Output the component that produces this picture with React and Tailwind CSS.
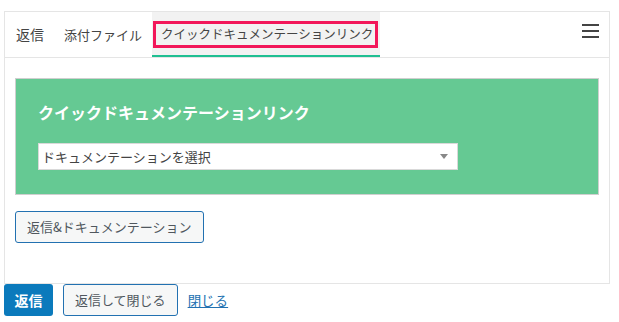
import React from 'react';

const font = { fontFamily: '"Noto Sans CJK JP", "Liberation Sans", sans-serif' };

function Hamburger() {
  return (
    <div className="flex flex-col gap-[4px] w-[17px]">
      <span className="block h-[2px] bg-[#444]" />
      <span className="block h-[2px] bg-[#444]" />
      <span className="block h-[2px] bg-[#444]" />
    </div>
  );
}

export default function App() {
  return (
    <div className="w-[619px] h-[322px] bg-white pt-[11px] text-[13px] text-[#333]" style={font}>
      <div className="ml-[4px] w-[606px] border border-[#e5e5e5] bg-white">
        {/* tabs */}
        <div className="flex items-stretch h-[46px] border-b border-[#e5e5e5] pl-[10px] pr-[10px]">
          <div className="flex items-center px-[1px] mr-[19px] text-[14px] text-[#444]">返信</div>
          <div className="flex items-center mr-[10px] text-[13px] text-[#444]">添付ファイル</div>
          <div className="flex items-center bg-[#f2f2f2] border-b-2 border-[#1fbf92] pl-[1px] w-[228px]">
            <div className="border-[3px] border-[#f2175a] h-[27px] flex items-center pl-[5px] w-[225px] mt-[2px] text-[12.5px] text-[#444] whitespace-nowrap">
              クイックドキュメンテーションリンク
            </div>
          </div>
          <div className="flex-1" />
          <div className="flex items-center -mt-[8px]">
            <Hamburger />
          </div>
        </div>

        {/* body */}
        <div className="pl-[10px] pr-[10px] pt-[20px] pb-[40px]">
          <div className="h-[117px] bg-[#65c993] border border-[#cfcfcf] px-[22px] pt-[21px]">
            <div className="text-white font-bold text-[16px] leading-[24px]">クイックドキュメンテーションリンク</div>
            <div className="mt-[19px] w-[420px] h-[27px] bg-white border border-[#d9d9d9] flex items-center justify-between pl-[3px] pr-[9px] text-[13px] text-[#444]">
              <span>ドキュメンテーションを選択</span>
              <span className="block w-0 h-0 border-l-[4px] border-r-[4px] border-t-[5px] border-l-transparent border-r-transparent border-t-[#888]" />
            </div>
          </div>
          <button className="mt-[16px] h-[32px] px-[11px] border border-[#2271b1] rounded-[3px] bg-[#f6f7f7] text-[13px] text-[#50575e]">
            返信&amp;ドキュメンテーション
          </button>
        </div>
      </div>

      {/* footer actions */}
      <div className="flex items-center ml-[4px] gap-[10px]">
        <button className="h-[32px] w-[49px] rounded-[3px] bg-[#0b7abc] text-white font-bold text-[14px]">返信</button>
        <button className="h-[32px] px-[11px] border border-[#2271b1] rounded-[3px] bg-[#f6f7f7] text-[13px] text-[#50575e]">返信して閉じる</button>
        <a className="text-[13.5px] text-[#2271b1] underline">閉じる</a>
      </div>
    </div>
  );
}
